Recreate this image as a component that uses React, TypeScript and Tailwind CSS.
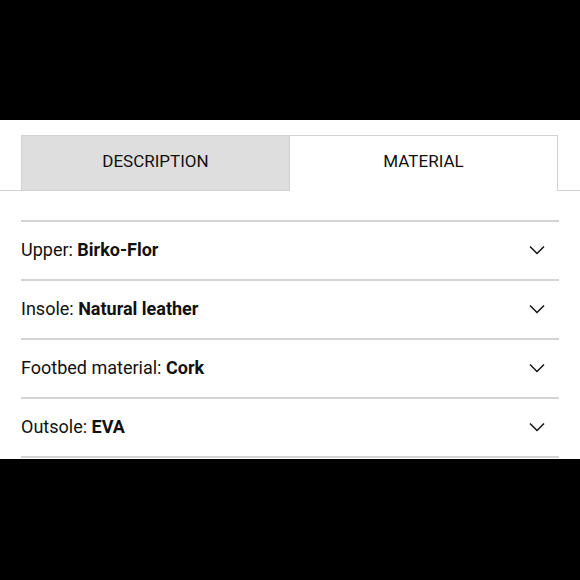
const rows = [
  { label: "Upper:", value: "Birko-Flor" },
  { label: "Insole:", value: "Natural leather" },
  { label: "Footbed material:", value: "Cork" },
  { label: "Outsole:", value: "EVA" },
];

function Chevron() {
  return (
    <svg width="16" height="10" viewBox="0 0 16 10" fill="none" stroke="#111" strokeWidth="1.5">
      <path d="M1 1.5 L8 8.5 L15 1.5" />
    </svg>
  );
}

export default function App() {
  return (
    <div className="h-[580px] w-[580px] bg-black flex flex-col" style={{ fontFamily: "Roboto, 'Liberation Sans', sans-serif" }}>
      <div className="h-[120px]" />
      <div className="h-[339px] bg-white pt-[15px]">
        <div className="flex h-[56px]">
          <div className="w-[21px] border-b border-[#d2d2d2]" />
          <div className="w-[269px] border border-[#d2d2d2] bg-[#dedede] flex items-center justify-center pb-[3px] text-[17px] text-[#111]">
            DESCRIPTION
          </div>
          <div className="w-[268px] border-t border-r border-[#d2d2d2] bg-white flex items-center justify-center pb-[3px] text-[17px] text-[#111]">
            MATERIAL
          </div>
          <div className="flex-1 border-b border-[#d2d2d2]" />
        </div>
        <div className="mt-[29px] ml-[21px] w-[538px]">
          {rows.map((r) => (
            <div
              key={r.label}
              className="h-[59px] border-t-2 border-[#d4d4d4] flex items-center justify-between pr-[14px] pb-[2px] text-[18px] text-[#111]"
            >
              <span>
                {r.label} <span className="font-bold">{r.value}</span>
              </span>
              <Chevron />
            </div>
          ))}
          <div className="border-t-2 border-[#d4d4d4]" />
        </div>
      </div>
    </div>
  );
}
